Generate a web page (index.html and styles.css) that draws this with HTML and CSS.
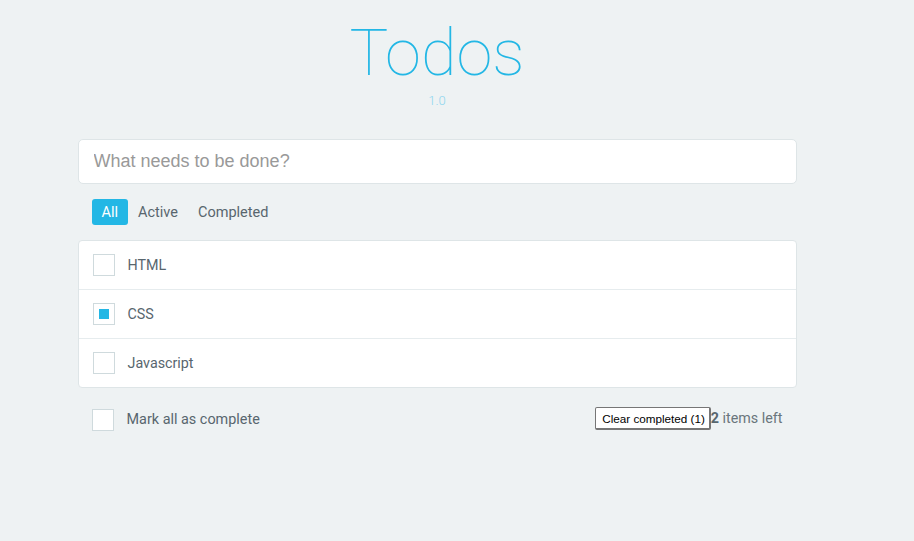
FILE: index.html
```html
<!DOCTYPE html>
<html lang="en">
<head>
  <meta charset="UTF-8" />
  <title>Todos</title>
  <link rel="stylesheet" href="styles.css">
</head>
<body>
  <div class="container">
    <header class="header">
      <h1>Todos</h1>
      <div class="version">1.0</div>
    </header>

    <input type="text" class="new-todo" placeholder="What needs to be done?" />

    <div class="filters">
      <a class="filter active">All</a>
      <a class="filter">Active</a>
      <a class="filter">Completed</a>
    </div>

    <ul class="todo-list">
      <li class="todo"><span class="check"></span><span class="label">HTML</span></li>
      <li class="todo done"><span class="check"></span><span class="label">CSS</span></li>
      <li class="todo"><span class="check"></span><span class="label">Javascript</span></li>
    </ul>

    <div class="footer">
      <label class="mark-all"><span class="check"></span>Mark all as complete</label>
      <div class="footer-right">
        <button class="clear">Clear completed (1)</button><span class="count"><b>2</b> items left</span>
      </div>
    </div>
  </div>
</body>
</html>
```

FILE: styles.css
```css
:root {
  --primary-color: #23b7e5;
  --background-color: #eef2f3;
  --text-color: #58666e;
  --border-color: #dee5e7;
}

body {
  margin: 0;
  background-color: var(--background-color);
  color: var(--text-color);
  font-family: Roboto, 'Liberation Sans', sans-serif;
}

.container {
  width: 719px;
  margin: 0 auto;
  position: relative;
  left: -20px;
}

.header {
  text-align: center;
  padding-top: 14px;
}

h1 {
  margin: 0;
  font-size: 65px;
  font-weight: 100;
  line-height: 78px;
  color: var(--primary-color);
}

.version {
  font-size: 13px;
  font-weight: 300;
  color: #8fd6ef;
  line-height: 16px;
  margin-top: 1px;
}

.new-todo {
  display: block;
  width: 100%;
  box-sizing: border-box;
  height: 45px;
  margin-top: 30px;
  padding: 0 15px;
  font-size: 18px;
  font-family: 'Liberation Sans', Arial, sans-serif;
  border: 1px solid var(--border-color);
  border-radius: 5px;
  background: #fff;
  outline: none;
}

.new-todo::placeholder {
  color: #999;
}

.filters {
  display: flex;
  padding: 15px 14px;
}

.filter {
  padding: 1px 10px 0;
  height: 25px;
  line-height: 25px;
  font-size: 14.5px;
  border-radius: 3px;
  cursor: pointer;
}

.filter.active {
  background-color: var(--primary-color);
  color: #fff;
}

.todo-list {
  list-style: none;
  margin: 0;
  padding: 0;
  background: #fff;
  border: 1px solid var(--border-color);
  border-radius: 4px;
}

.todo {
  display: flex;
  align-items: center;
  height: 48px;
  padding-left: 14px;
  font-size: 14.3px;
  border-top: 1px solid #e6ecee;
}

.todo:first-child {
  border-top: none;
}

.check {
  width: 20px;
  height: 20px;
  border: 1px solid #cfdadd;
  background: #fff;
  display: flex;
  align-items: center;
  justify-content: center;
  margin-right: 13px;
}

.done .check::after {
  content: "";
  width: 10px;
  height: 10px;
  background: var(--primary-color);
}

.footer {
  display: flex;
  justify-content: space-between;
  align-items: center;
  padding: 19px 14px 0 14px;
}

.mark-all {
  display: flex;
  align-items: center;
  font-size: 14.4px;
}

.footer-right {
  display: flex;
  align-items: center;
  font-size: 14.3px;
  color: #6a767c;
  position: relative;
  top: -2px;
}

.clear {
  font-family: 'Liberation Sans', Arial, sans-serif;
  font-size: 11.7px;
  height: 23px;
  padding: 0 4px 0 6px;
  margin-top: 2px;
  background: #fff;
  border: 1px solid #767676;
  border-bottom-width: 2px;
  border-right-width: 2px;
  border-radius: 2px;
  color: #000;
}

.count b {
  color: #58666e;
}
```
